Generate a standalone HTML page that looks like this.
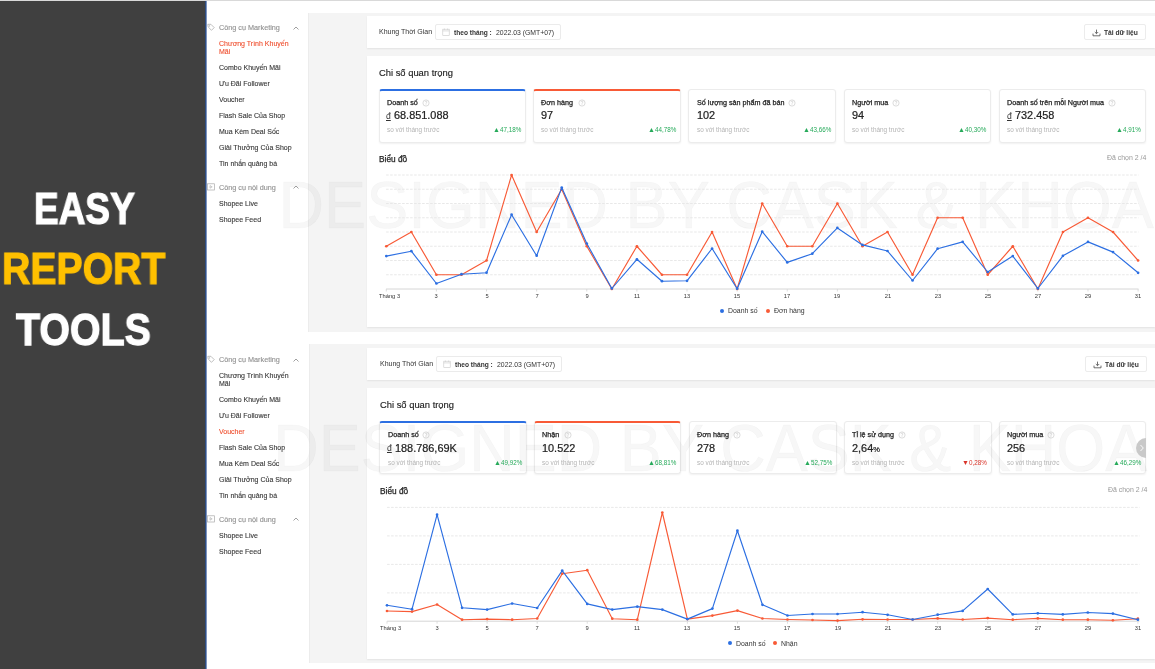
<!DOCTYPE html>
<html><head><meta charset="utf-8">
<style>
html,body{margin:0;padding:0;}
body{width:1155px;height:669px;overflow:hidden;position:relative;background:#fff;font-family:"Liberation Sans", sans-serif;}
.t{position:absolute;white-space:nowrap;font-family:"Liberation Sans", sans-serif;z-index:2;will-change:transform;}
svg{z-index:2;}
.wm{position:absolute;white-space:nowrap;font-family:"Liberation Sans", sans-serif;z-index:1;}
.kpi{position:absolute;background:#fff;border:1px solid #ececec;border-radius:3px;box-sizing:border-box;box-shadow:0 1px 2px rgba(0,0,0,0.06);}
.card{position:absolute;background:#fff;box-shadow:0 1px 2px rgba(0,0,0,0.08);}
</style></head><body>

<div style="position:absolute;left:0px;top:0px;width:1155px;height:1px;background:#d9d9d9;"></div>
<div style="position:absolute;left:0px;top:1px;width:205px;height:668px;background:#404040;"></div>
<div style="position:absolute;left:205px;top:1px;width:1px;height:668px;background:#2e4d80;"></div>
<div style="position:absolute;left:206px;top:1px;width:1px;height:668px;background:#7d93bd;"></div>
<div class="t" style="left:33.50px;top:184.70px;font-size:42.39px;line-height:47.35px;font-weight:bold;color:#ffffff;-webkit-text-stroke:1.2px #ffffff;transform-origin:0 0;transform:scale(0.8730,1.0310);">EASY</div>
<div class="t" style="left:1.60px;top:245.10px;font-size:43.62px;line-height:48.72px;font-weight:bold;color:#ffc000;-webkit-text-stroke:1.2px #ffc000;transform-origin:0 0;transform:scale(0.8990,0.9980);">REPORT</div>
<div class="t" style="left:15.50px;top:304.00px;font-size:43.07px;line-height:48.11px;font-weight:bold;color:#ffffff;-webkit-text-stroke:1.2px #ffffff;transform-origin:0 0;transform:scale(0.9140,1.0450);">TOOLS</div>
<svg style="position:absolute;left:207px;top:23px" width="9" height="9" viewBox="0 0 9 9"><path d="M0.8 1.3 L3.9 1.3 L7.2 4.6 L4.5 7.3 L1.2 4 Z" fill="none" stroke="#aaa" stroke-width="0.75" stroke-linejoin="round"/><circle cx="2.6" cy="2.9" r="0.55" fill="#aaa"/></svg>
<div class="t" style="left:218.80px;top:24.14px;font-size:7.25px;line-height:8.10px;color:#909090;font-weight:normal;-webkit-text-stroke:0.12px currentColor;">Công cụ Marketing</div>
<svg style="position:absolute;left:292px;top:25px" width="8" height="6" viewBox="0 0 8 6"><path d="M1.5 4.5 L4 2 L6.5 4.5" fill="none" stroke="#888" stroke-width="0.8"/></svg>
<div class="t" style="left:218.80px;top:40.06px;font-size:7.0px;line-height:7.82px;color:#ee4d2d;font-weight:normal;-webkit-text-stroke:0.1px currentColor;">Chương Trình Khuyến</div>
<div class="t" style="left:218.80px;top:47.66px;font-size:7.0px;line-height:7.82px;color:#ee4d2d;font-weight:normal;-webkit-text-stroke:0.1px currentColor;">Mãi</div>
<div class="t" style="left:218.80px;top:63.87px;font-size:7.0px;line-height:7.82px;color:#333;font-weight:normal;-webkit-text-stroke:0.1px currentColor;">Combo Khuyến Mãi</div>
<div class="t" style="left:218.80px;top:79.87px;font-size:7.0px;line-height:7.82px;color:#333;font-weight:normal;-webkit-text-stroke:0.1px currentColor;">Ưu Đãi Follower</div>
<div class="t" style="left:218.80px;top:95.67px;font-size:7.0px;line-height:7.82px;color:#333;font-weight:normal;-webkit-text-stroke:0.1px currentColor;">Voucher</div>
<div class="t" style="left:218.80px;top:111.87px;font-size:7.0px;line-height:7.82px;color:#333;font-weight:normal;-webkit-text-stroke:0.1px currentColor;">Flash Sale Của Shop</div>
<div class="t" style="left:218.80px;top:127.77px;font-size:7.0px;line-height:7.82px;color:#333;font-weight:normal;-webkit-text-stroke:0.1px currentColor;">Mua Kèm Deal Sốc</div>
<div class="t" style="left:218.80px;top:143.66px;font-size:7.0px;line-height:7.82px;color:#333;font-weight:normal;-webkit-text-stroke:0.1px currentColor;">Giải Thưởng Của Shop</div>
<div class="t" style="left:218.80px;top:159.66px;font-size:7.0px;line-height:7.82px;color:#333;font-weight:normal;-webkit-text-stroke:0.1px currentColor;">Tin nhắn quảng bá</div>
<svg style="position:absolute;left:207px;top:183px" width="8" height="8" viewBox="0 0 8 8"><rect x="0.6" y="0.8" width="6.8" height="6.2" fill="none" stroke="#aaa" stroke-width="0.7"/><path d="M3 2.6 L5.2 3.9 L3 5.2 Z" fill="none" stroke="#aaa" stroke-width="0.6"/></svg>
<div class="t" style="left:218.80px;top:183.74px;font-size:7.25px;line-height:8.10px;color:#909090;font-weight:normal;-webkit-text-stroke:0.12px currentColor;">Công cụ nội dung</div>
<svg style="position:absolute;left:292px;top:184px" width="8" height="6" viewBox="0 0 8 6"><path d="M1.5 4.5 L4 2 L6.5 4.5" fill="none" stroke="#888" stroke-width="0.8"/></svg>
<div class="t" style="left:218.80px;top:199.76px;font-size:7.0px;line-height:7.82px;color:#333;font-weight:normal;-webkit-text-stroke:0.1px currentColor;">Shopee Live</div>
<div class="t" style="left:218.80px;top:215.66px;font-size:7.0px;line-height:7.82px;color:#333;font-weight:normal;-webkit-text-stroke:0.1px currentColor;">Shopee Feed</div>
<svg style="position:absolute;left:207px;top:355px" width="9" height="9" viewBox="0 0 9 9"><path d="M0.8 1.3 L3.9 1.3 L7.2 4.6 L4.5 7.3 L1.2 4 Z" fill="none" stroke="#aaa" stroke-width="0.75" stroke-linejoin="round"/><circle cx="2.6" cy="2.9" r="0.55" fill="#aaa"/></svg>
<div class="t" style="left:219.40px;top:356.14px;font-size:7.25px;line-height:8.10px;color:#909090;font-weight:normal;-webkit-text-stroke:0.12px currentColor;">Công cụ Marketing</div>
<svg style="position:absolute;left:292px;top:357px" width="8" height="6" viewBox="0 0 8 6"><path d="M1.5 4.5 L4 2 L6.5 4.5" fill="none" stroke="#888" stroke-width="0.8"/></svg>
<div class="t" style="left:219.40px;top:372.06px;font-size:7.0px;line-height:7.82px;color:#333;font-weight:normal;-webkit-text-stroke:0.1px currentColor;">Chương Trình Khuyến</div>
<div class="t" style="left:219.40px;top:379.67px;font-size:7.0px;line-height:7.82px;color:#333;font-weight:normal;-webkit-text-stroke:0.1px currentColor;">Mãi</div>
<div class="t" style="left:219.40px;top:395.87px;font-size:7.0px;line-height:7.82px;color:#333;font-weight:normal;-webkit-text-stroke:0.1px currentColor;">Combo Khuyến Mãi</div>
<div class="t" style="left:219.40px;top:411.87px;font-size:7.0px;line-height:7.82px;color:#333;font-weight:normal;-webkit-text-stroke:0.1px currentColor;">Ưu Đãi Follower</div>
<div class="t" style="left:219.40px;top:427.67px;font-size:7.0px;line-height:7.82px;color:#ee4d2d;font-weight:normal;-webkit-text-stroke:0.1px currentColor;">Voucher</div>
<div class="t" style="left:219.40px;top:443.87px;font-size:7.0px;line-height:7.82px;color:#333;font-weight:normal;-webkit-text-stroke:0.1px currentColor;">Flash Sale Của Shop</div>
<div class="t" style="left:219.40px;top:459.77px;font-size:7.0px;line-height:7.82px;color:#333;font-weight:normal;-webkit-text-stroke:0.1px currentColor;">Mua Kèm Deal Sốc</div>
<div class="t" style="left:219.40px;top:475.67px;font-size:7.0px;line-height:7.82px;color:#333;font-weight:normal;-webkit-text-stroke:0.1px currentColor;">Giải Thưởng Của Shop</div>
<div class="t" style="left:219.40px;top:491.67px;font-size:7.0px;line-height:7.82px;color:#333;font-weight:normal;-webkit-text-stroke:0.1px currentColor;">Tin nhắn quảng bá</div>
<svg style="position:absolute;left:207px;top:515px" width="8" height="8" viewBox="0 0 8 8"><rect x="0.6" y="0.8" width="6.8" height="6.2" fill="none" stroke="#aaa" stroke-width="0.7"/><path d="M3 2.6 L5.2 3.9 L3 5.2 Z" fill="none" stroke="#aaa" stroke-width="0.6"/></svg>
<div class="t" style="left:219.40px;top:515.74px;font-size:7.25px;line-height:8.10px;color:#909090;font-weight:normal;-webkit-text-stroke:0.12px currentColor;">Công cụ nội dung</div>
<svg style="position:absolute;left:292px;top:516px" width="8" height="6" viewBox="0 0 8 6"><path d="M1.5 4.5 L4 2 L6.5 4.5" fill="none" stroke="#888" stroke-width="0.8"/></svg>
<div class="t" style="left:219.40px;top:531.76px;font-size:7.0px;line-height:7.82px;color:#333;font-weight:normal;-webkit-text-stroke:0.1px currentColor;">Shopee Live</div>
<div class="t" style="left:219.40px;top:547.66px;font-size:7.0px;line-height:7.82px;color:#333;font-weight:normal;-webkit-text-stroke:0.1px currentColor;">Shopee Feed</div>
<div style="position:absolute;left:308px;top:13px;width:847px;height:319px;background:#f4f4f4;"></div>
<div style="position:absolute;left:308px;top:13px;width:1px;height:319px;background:#ececec;"></div>
<div style="position:absolute;left:366.5px;top:15.5px;width:788.5px;height:32.0px;background:#fff;box-shadow:0 1px 1.5px rgba(0,0,0,0.07);"></div>
<div style="position:absolute;left:366.5px;top:55.7px;width:788.5px;height:271.3px;background:#fff;box-shadow:0 1px 1.5px rgba(0,0,0,0.07);"></div>
<div class="t" style="left:378.70px;top:27.87px;font-size:7.0px;line-height:7.82px;color:#333;font-weight:normal;">Khung Thời Gian</div>
<div style="position:absolute;left:435.0px;top:24.4px;width:125.5px;height:15.600000000000001px;border:1px solid #ebebeb;border-radius:2px;box-sizing:border-box;background:#fff;"></div>
<svg style="position:absolute;left:441.50px;top:28.00px" width="8" height="8" viewBox="0 0 8 8"><rect x="0.8" y="1.2" width="6.4" height="6.2" fill="none" stroke="#c8c8c8" stroke-width="0.6"/><path d="M0.8 2.9 H7.2 M2.4 0.5 V1.8 M5.6 0.5 V1.8" stroke="#c8c8c8" stroke-width="0.6"/></svg>
<div class="t" style="left:454.00px;top:28.53px;font-size:6.6px;line-height:7.37px;color:#333;font-weight:bold;">theo tháng :</div>
<div class="t" style="left:496.00px;top:28.78px;font-size:6.87px;line-height:7.67px;color:#333;font-weight:normal;">2022.03 (GMT+07)</div>
<div style="position:absolute;left:1083.5px;top:24.4px;width:62.299999999999955px;height:15.600000000000001px;border:1px solid #ececec;border-radius:2px;box-sizing:border-box;background:#fff;"></div>
<svg style="position:absolute;left:1091.50px;top:28.50px" width="9" height="8" viewBox="0 0 9 8"><path d="M4.5 0.6 V4.6 M2.8 3.0 L4.5 4.7 L6.2 3.0 M1.0 4.6 V6.8 H8.0 V4.6" fill="none" stroke="#555" stroke-width="0.85"/></svg>
<div class="t" style="left:1104.10px;top:28.54px;font-size:6.7px;line-height:7.48px;color:#333;font-weight:bold;">Tải dữ liệu</div>
<div class="t" style="left:378.70px;top:68.09px;font-size:9.4px;line-height:10.50px;color:#222;font-weight:normal;-webkit-text-stroke:0.15px #222;">Chi số quan trọng</div>
<div class="kpi" style="left:378.50px;top:89.00px;width:147.10px;height:53.60px;border-top:2px solid #2c6fe2;"></div>
<div class="t" style="left:386.60px;top:98.88px;font-size:7.2px;line-height:8.04px;color:#222;font-weight:normal;-webkit-text-stroke:0.25px #222;">Doanh số</div>
<svg style="position:absolute;left:421.60px;top:98.70px" width="8" height="8" viewBox="0 0 8 8"><circle cx="4" cy="4" r="3.1" fill="none" stroke="#c4c4c4" stroke-width="0.6"/><path d="M3 3.1 Q3 2.1 4 2.1 Q5 2.1 5 3 Q5 3.6 4 4 L4 4.7" fill="none" stroke="#c4c4c4" stroke-width="0.55"/><circle cx="4" cy="5.7" r="0.35" fill="#c4c4c4"/></svg>
<div class="t" style="left:386.30px;top:111.52px;font-size:8.6px;line-height:9.61px;color:#333;font-weight:normal;"><span style="text-decoration:underline;text-decoration-thickness:0.8px;text-underline-offset:0.6px">đ</span></div>
<div class="t" style="left:394.00px;top:109.44px;font-size:10.9px;line-height:12.18px;color:#222;font-weight:normal;-webkit-text-stroke:0.22px #222;">68.851.088</div>
<div class="t" style="left:386.60px;top:126.21px;font-size:6.4px;line-height:7.15px;color:#b4b4b4;font-weight:normal;">so với tháng trước</div>
<div class="t" style="right:634.00px;top:126.20px;font-size:6.3px;line-height:7.04px;color:#26aa5a;font-weight:normal;"><span style="font-size:7px;position:relative;top:0.3px">▲</span>47,18%</div>
<div class="kpi" style="left:533.10px;top:89.00px;width:147.70px;height:53.60px;border-top:2px solid #f85a36;"></div>
<div class="t" style="left:541.20px;top:98.88px;font-size:7.2px;line-height:8.04px;color:#222;font-weight:normal;-webkit-text-stroke:0.25px #222;">Đơn hàng</div>
<svg style="position:absolute;left:577.60px;top:98.70px" width="8" height="8" viewBox="0 0 8 8"><circle cx="4" cy="4" r="3.1" fill="none" stroke="#c4c4c4" stroke-width="0.6"/><path d="M3 3.1 Q3 2.1 4 2.1 Q5 2.1 5 3 Q5 3.6 4 4 L4 4.7" fill="none" stroke="#c4c4c4" stroke-width="0.55"/><circle cx="4" cy="5.7" r="0.35" fill="#c4c4c4"/></svg>
<div class="t" style="left:541.20px;top:109.44px;font-size:10.9px;line-height:12.18px;color:#222;font-weight:normal;-webkit-text-stroke:0.22px #222;">97</div>
<div class="t" style="left:541.20px;top:126.21px;font-size:6.4px;line-height:7.15px;color:#b4b4b4;font-weight:normal;">so với tháng trước</div>
<div class="t" style="right:478.80px;top:126.20px;font-size:6.3px;line-height:7.04px;color:#26aa5a;font-weight:normal;"><span style="font-size:7px;position:relative;top:0.3px">▲</span>44,78%</div>
<div class="kpi" style="left:688.40px;top:89.00px;width:147.60px;height:53.60px;"></div>
<div class="t" style="left:696.50px;top:98.88px;font-size:7.2px;line-height:8.04px;color:#222;font-weight:normal;-webkit-text-stroke:0.25px #222;">Số lượng sản phẩm đã bán</div>
<svg style="position:absolute;left:788.20px;top:98.70px" width="8" height="8" viewBox="0 0 8 8"><circle cx="4" cy="4" r="3.1" fill="none" stroke="#c4c4c4" stroke-width="0.6"/><path d="M3 3.1 Q3 2.1 4 2.1 Q5 2.1 5 3 Q5 3.6 4 4 L4 4.7" fill="none" stroke="#c4c4c4" stroke-width="0.55"/><circle cx="4" cy="5.7" r="0.35" fill="#c4c4c4"/></svg>
<div class="t" style="left:696.50px;top:109.44px;font-size:10.9px;line-height:12.18px;color:#222;font-weight:normal;-webkit-text-stroke:0.22px #222;">102</div>
<div class="t" style="left:696.50px;top:126.21px;font-size:6.4px;line-height:7.15px;color:#b4b4b4;font-weight:normal;">so với tháng trước</div>
<div class="t" style="right:323.60px;top:126.20px;font-size:6.3px;line-height:7.04px;color:#26aa5a;font-weight:normal;"><span style="font-size:7px;position:relative;top:0.3px">▲</span>43,66%</div>
<div class="kpi" style="left:843.80px;top:89.00px;width:146.80px;height:53.60px;"></div>
<div class="t" style="left:851.90px;top:98.88px;font-size:7.2px;line-height:8.04px;color:#222;font-weight:normal;-webkit-text-stroke:0.25px #222;">Người mua</div>
<svg style="position:absolute;left:892.00px;top:98.70px" width="8" height="8" viewBox="0 0 8 8"><circle cx="4" cy="4" r="3.1" fill="none" stroke="#c4c4c4" stroke-width="0.6"/><path d="M3 3.1 Q3 2.1 4 2.1 Q5 2.1 5 3 Q5 3.6 4 4 L4 4.7" fill="none" stroke="#c4c4c4" stroke-width="0.55"/><circle cx="4" cy="5.7" r="0.35" fill="#c4c4c4"/></svg>
<div class="t" style="left:851.90px;top:109.44px;font-size:10.9px;line-height:12.18px;color:#222;font-weight:normal;-webkit-text-stroke:0.22px #222;">94</div>
<div class="t" style="left:851.90px;top:126.21px;font-size:6.4px;line-height:7.15px;color:#b4b4b4;font-weight:normal;">so với tháng trước</div>
<div class="t" style="right:169.00px;top:126.20px;font-size:6.3px;line-height:7.04px;color:#26aa5a;font-weight:normal;"><span style="font-size:7px;position:relative;top:0.3px">▲</span>40,30%</div>
<div class="kpi" style="left:999.00px;top:89.00px;width:146.80px;height:53.60px;"></div>
<div class="t" style="left:1007.10px;top:98.88px;font-size:7.2px;line-height:8.04px;color:#222;font-weight:normal;-webkit-text-stroke:0.25px #222;">Doanh số trên mỗi Người mua</div>
<svg style="position:absolute;left:1108.30px;top:98.70px" width="8" height="8" viewBox="0 0 8 8"><circle cx="4" cy="4" r="3.1" fill="none" stroke="#c4c4c4" stroke-width="0.6"/><path d="M3 3.1 Q3 2.1 4 2.1 Q5 2.1 5 3 Q5 3.6 4 4 L4 4.7" fill="none" stroke="#c4c4c4" stroke-width="0.55"/><circle cx="4" cy="5.7" r="0.35" fill="#c4c4c4"/></svg>
<div class="t" style="left:1006.80px;top:111.52px;font-size:8.6px;line-height:9.61px;color:#333;font-weight:normal;"><span style="text-decoration:underline;text-decoration-thickness:0.8px;text-underline-offset:0.6px">đ</span></div>
<div class="t" style="left:1014.50px;top:109.44px;font-size:10.9px;line-height:12.18px;color:#222;font-weight:normal;-webkit-text-stroke:0.22px #222;">732.458</div>
<div class="t" style="left:1007.10px;top:126.21px;font-size:6.4px;line-height:7.15px;color:#b4b4b4;font-weight:normal;">so với tháng trước</div>
<div class="t" style="right:13.80px;top:126.20px;font-size:6.3px;line-height:7.04px;color:#26aa5a;font-weight:normal;"><span style="font-size:7px;position:relative;top:0.3px">▲</span>4,91%</div>
<div class="t" style="left:378.70px;top:154.79px;font-size:8.3px;line-height:9.27px;color:#222;font-weight:normal;-webkit-text-stroke:0.25px #222;">Biểu đồ</div>
<div class="t" style="right:9.00px;top:154.01px;font-size:6.95px;line-height:7.76px;color:#999;font-weight:normal;">Đã chọn 2 /4</div>
<svg style="position:absolute;left:0;top:0" width="1155" height="669"><line x1="386.1" y1="175.0" x2="1138.5" y2="175.0" stroke="#e5e5e5" stroke-width="0.9" stroke-dasharray="2.6 1.4"/><line x1="386.1" y1="189.25" x2="1138.5" y2="189.25" stroke="#e5e5e5" stroke-width="0.9" stroke-dasharray="2.6 1.4"/><line x1="386.1" y1="203.5" x2="1138.5" y2="203.5" stroke="#e5e5e5" stroke-width="0.9" stroke-dasharray="2.6 1.4"/><line x1="386.1" y1="217.75" x2="1138.5" y2="217.75" stroke="#e5e5e5" stroke-width="0.9" stroke-dasharray="2.6 1.4"/><line x1="386.1" y1="232.0" x2="1138.5" y2="232.0" stroke="#e5e5e5" stroke-width="0.9" stroke-dasharray="2.6 1.4"/><line x1="386.1" y1="246.25" x2="1138.5" y2="246.25" stroke="#e5e5e5" stroke-width="0.9" stroke-dasharray="2.6 1.4"/><line x1="386.1" y1="260.5" x2="1138.5" y2="260.5" stroke="#e5e5e5" stroke-width="0.9" stroke-dasharray="2.6 1.4"/><line x1="386.1" y1="274.75" x2="1138.5" y2="274.75" stroke="#e5e5e5" stroke-width="0.9" stroke-dasharray="2.6 1.4"/><line x1="386.1" y1="289" x2="1138.5" y2="289" stroke="#d6d6d6" stroke-width="1"/><line x1="386.30" y1="289" x2="386.30" y2="291.5" stroke="#d6d6d6" stroke-width="0.8"/><line x1="436.42" y1="289" x2="436.42" y2="291.5" stroke="#d6d6d6" stroke-width="0.8"/><line x1="486.54" y1="289" x2="486.54" y2="291.5" stroke="#d6d6d6" stroke-width="0.8"/><line x1="536.66" y1="289" x2="536.66" y2="291.5" stroke="#d6d6d6" stroke-width="0.8"/><line x1="586.78" y1="289" x2="586.78" y2="291.5" stroke="#d6d6d6" stroke-width="0.8"/><line x1="636.90" y1="289" x2="636.90" y2="291.5" stroke="#d6d6d6" stroke-width="0.8"/><line x1="687.02" y1="289" x2="687.02" y2="291.5" stroke="#d6d6d6" stroke-width="0.8"/><line x1="737.14" y1="289" x2="737.14" y2="291.5" stroke="#d6d6d6" stroke-width="0.8"/><line x1="787.26" y1="289" x2="787.26" y2="291.5" stroke="#d6d6d6" stroke-width="0.8"/><line x1="837.38" y1="289" x2="837.38" y2="291.5" stroke="#d6d6d6" stroke-width="0.8"/><line x1="887.50" y1="289" x2="887.50" y2="291.5" stroke="#d6d6d6" stroke-width="0.8"/><line x1="937.62" y1="289" x2="937.62" y2="291.5" stroke="#d6d6d6" stroke-width="0.8"/><line x1="987.74" y1="289" x2="987.74" y2="291.5" stroke="#d6d6d6" stroke-width="0.8"/><line x1="1037.86" y1="289" x2="1037.86" y2="291.5" stroke="#d6d6d6" stroke-width="0.8"/><line x1="1087.98" y1="289" x2="1087.98" y2="291.5" stroke="#d6d6d6" stroke-width="0.8"/><line x1="1138.10" y1="289" x2="1138.10" y2="291.5" stroke="#d6d6d6" stroke-width="0.8"/><polyline points="386.30,246.25 411.36,232.00 436.42,274.75 461.48,274.75 486.54,260.50 511.60,175.00 536.66,232.00 561.72,189.25 586.78,246.25 611.84,289.00 636.90,246.25 661.96,274.75 687.02,274.75 712.08,232.00 737.14,289.00 762.20,203.50 787.26,246.25 812.32,246.25 837.38,203.50 862.44,246.25 887.50,232.00 912.56,274.75 937.62,217.75 962.68,217.75 987.74,274.75 1012.80,246.25 1037.86,289.00 1062.92,232.00 1087.98,217.75 1113.04,232.00 1138.10,260.50" fill="none" stroke="#f85a36" stroke-width="1.15" stroke-linejoin="round"/><circle cx="386.30" cy="246.25" r="1.35" fill="#f85a36"/><circle cx="411.36" cy="232.00" r="1.35" fill="#f85a36"/><circle cx="436.42" cy="274.75" r="1.35" fill="#f85a36"/><circle cx="461.48" cy="274.75" r="1.35" fill="#f85a36"/><circle cx="486.54" cy="260.50" r="1.35" fill="#f85a36"/><circle cx="511.60" cy="175.00" r="1.35" fill="#f85a36"/><circle cx="536.66" cy="232.00" r="1.35" fill="#f85a36"/><circle cx="561.72" cy="189.25" r="1.35" fill="#f85a36"/><circle cx="586.78" cy="246.25" r="1.35" fill="#f85a36"/><circle cx="611.84" cy="289.00" r="1.35" fill="#f85a36"/><circle cx="636.90" cy="246.25" r="1.35" fill="#f85a36"/><circle cx="661.96" cy="274.75" r="1.35" fill="#f85a36"/><circle cx="687.02" cy="274.75" r="1.35" fill="#f85a36"/><circle cx="712.08" cy="232.00" r="1.35" fill="#f85a36"/><circle cx="737.14" cy="289.00" r="1.35" fill="#f85a36"/><circle cx="762.20" cy="203.50" r="1.35" fill="#f85a36"/><circle cx="787.26" cy="246.25" r="1.35" fill="#f85a36"/><circle cx="812.32" cy="246.25" r="1.35" fill="#f85a36"/><circle cx="837.38" cy="203.50" r="1.35" fill="#f85a36"/><circle cx="862.44" cy="246.25" r="1.35" fill="#f85a36"/><circle cx="887.50" cy="232.00" r="1.35" fill="#f85a36"/><circle cx="912.56" cy="274.75" r="1.35" fill="#f85a36"/><circle cx="937.62" cy="217.75" r="1.35" fill="#f85a36"/><circle cx="962.68" cy="217.75" r="1.35" fill="#f85a36"/><circle cx="987.74" cy="274.75" r="1.35" fill="#f85a36"/><circle cx="1012.80" cy="246.25" r="1.35" fill="#f85a36"/><circle cx="1037.86" cy="289.00" r="1.35" fill="#f85a36"/><circle cx="1062.92" cy="232.00" r="1.35" fill="#f85a36"/><circle cx="1087.98" cy="217.75" r="1.35" fill="#f85a36"/><circle cx="1113.04" cy="232.00" r="1.35" fill="#f85a36"/><circle cx="1138.10" cy="260.50" r="1.35" fill="#f85a36"/><polyline points="386.30,256.10 411.36,251.20 436.42,283.50 461.48,274.20 486.54,272.70 511.60,214.70 536.66,255.70 561.72,187.60 586.78,243.50 611.84,288.50 636.90,259.30 661.96,281.20 687.02,280.80 712.08,248.50 737.14,288.70 762.20,231.70 787.26,262.40 812.32,253.70 837.38,227.90 862.44,244.90 887.50,251.00 912.56,280.50 937.62,248.70 962.68,241.90 987.74,272.00 1012.80,256.10 1037.86,288.50 1062.92,255.80 1087.98,241.90 1113.04,252.10 1138.10,272.80" fill="none" stroke="#2c6fe2" stroke-width="1.15" stroke-linejoin="round"/><circle cx="386.30" cy="256.10" r="1.35" fill="#2c6fe2"/><circle cx="411.36" cy="251.20" r="1.35" fill="#2c6fe2"/><circle cx="436.42" cy="283.50" r="1.35" fill="#2c6fe2"/><circle cx="461.48" cy="274.20" r="1.35" fill="#2c6fe2"/><circle cx="486.54" cy="272.70" r="1.35" fill="#2c6fe2"/><circle cx="511.60" cy="214.70" r="1.35" fill="#2c6fe2"/><circle cx="536.66" cy="255.70" r="1.35" fill="#2c6fe2"/><circle cx="561.72" cy="187.60" r="1.35" fill="#2c6fe2"/><circle cx="586.78" cy="243.50" r="1.35" fill="#2c6fe2"/><circle cx="611.84" cy="288.50" r="1.35" fill="#2c6fe2"/><circle cx="636.90" cy="259.30" r="1.35" fill="#2c6fe2"/><circle cx="661.96" cy="281.20" r="1.35" fill="#2c6fe2"/><circle cx="687.02" cy="280.80" r="1.35" fill="#2c6fe2"/><circle cx="712.08" cy="248.50" r="1.35" fill="#2c6fe2"/><circle cx="737.14" cy="288.70" r="1.35" fill="#2c6fe2"/><circle cx="762.20" cy="231.70" r="1.35" fill="#2c6fe2"/><circle cx="787.26" cy="262.40" r="1.35" fill="#2c6fe2"/><circle cx="812.32" cy="253.70" r="1.35" fill="#2c6fe2"/><circle cx="837.38" cy="227.90" r="1.35" fill="#2c6fe2"/><circle cx="862.44" cy="244.90" r="1.35" fill="#2c6fe2"/><circle cx="887.50" cy="251.00" r="1.35" fill="#2c6fe2"/><circle cx="912.56" cy="280.50" r="1.35" fill="#2c6fe2"/><circle cx="937.62" cy="248.70" r="1.35" fill="#2c6fe2"/><circle cx="962.68" cy="241.90" r="1.35" fill="#2c6fe2"/><circle cx="987.74" cy="272.00" r="1.35" fill="#2c6fe2"/><circle cx="1012.80" cy="256.10" r="1.35" fill="#2c6fe2"/><circle cx="1037.86" cy="288.50" r="1.35" fill="#2c6fe2"/><circle cx="1062.92" cy="255.80" r="1.35" fill="#2c6fe2"/><circle cx="1087.98" cy="241.90" r="1.35" fill="#2c6fe2"/><circle cx="1113.04" cy="252.10" r="1.35" fill="#2c6fe2"/><circle cx="1138.10" cy="272.80" r="1.35" fill="#2c6fe2"/></svg>
<div class="t" style="left:378.70px;top:293.10px;font-size:5.75px;line-height:6.42px;color:#333;font-weight:normal;">Tháng 3</div>
<div class="t" style="left:436.42px;transform:translateX(-50%);top:293.10px;font-size:5.75px;line-height:6.42px;color:#333;font-weight:normal;">3</div>
<div class="t" style="left:486.54px;transform:translateX(-50%);top:293.10px;font-size:5.75px;line-height:6.42px;color:#333;font-weight:normal;">5</div>
<div class="t" style="left:536.66px;transform:translateX(-50%);top:293.10px;font-size:5.75px;line-height:6.42px;color:#333;font-weight:normal;">7</div>
<div class="t" style="left:586.78px;transform:translateX(-50%);top:293.10px;font-size:5.75px;line-height:6.42px;color:#333;font-weight:normal;">9</div>
<div class="t" style="left:636.90px;transform:translateX(-50%);top:293.10px;font-size:5.75px;line-height:6.42px;color:#333;font-weight:normal;">11</div>
<div class="t" style="left:687.02px;transform:translateX(-50%);top:293.10px;font-size:5.75px;line-height:6.42px;color:#333;font-weight:normal;">13</div>
<div class="t" style="left:737.14px;transform:translateX(-50%);top:293.10px;font-size:5.75px;line-height:6.42px;color:#333;font-weight:normal;">15</div>
<div class="t" style="left:787.26px;transform:translateX(-50%);top:293.10px;font-size:5.75px;line-height:6.42px;color:#333;font-weight:normal;">17</div>
<div class="t" style="left:837.38px;transform:translateX(-50%);top:293.10px;font-size:5.75px;line-height:6.42px;color:#333;font-weight:normal;">19</div>
<div class="t" style="left:887.50px;transform:translateX(-50%);top:293.10px;font-size:5.75px;line-height:6.42px;color:#333;font-weight:normal;">21</div>
<div class="t" style="left:937.62px;transform:translateX(-50%);top:293.10px;font-size:5.75px;line-height:6.42px;color:#333;font-weight:normal;">23</div>
<div class="t" style="left:987.74px;transform:translateX(-50%);top:293.10px;font-size:5.75px;line-height:6.42px;color:#333;font-weight:normal;">25</div>
<div class="t" style="left:1037.86px;transform:translateX(-50%);top:293.10px;font-size:5.75px;line-height:6.42px;color:#333;font-weight:normal;">27</div>
<div class="t" style="left:1087.98px;transform:translateX(-50%);top:293.10px;font-size:5.75px;line-height:6.42px;color:#333;font-weight:normal;">29</div>
<div class="t" style="left:1138.10px;transform:translateX(-50%);top:293.10px;font-size:5.75px;line-height:6.42px;color:#333;font-weight:normal;">31</div>
<div style="position:absolute;left:719.90px;top:309.00px;width:4.2px;height:4.2px;border-radius:50%;background:#2c6fe2"></div>
<div class="t" style="left:727.80px;top:307.26px;font-size:6.9px;line-height:7.71px;color:#333;font-weight:normal;">Doanh số</div>
<div style="position:absolute;left:765.70px;top:309.00px;width:4.2px;height:4.2px;border-radius:50%;background:#f85a36"></div>
<div class="t" style="left:773.70px;top:307.26px;font-size:6.9px;line-height:7.71px;color:#333;font-weight:normal;">Đơn hàng</div>
<div style="position:absolute;left:309px;top:344px;width:846px;height:319px;background:#f4f4f4;"></div>
<div style="position:absolute;left:309px;top:344px;width:1px;height:319px;background:#ececec;"></div>
<div style="position:absolute;left:367.4px;top:348px;width:787.6px;height:32.19999999999999px;background:#fff;box-shadow:0 1px 1.5px rgba(0,0,0,0.07);"></div>
<div style="position:absolute;left:367.4px;top:387.6px;width:787.6px;height:271.9px;background:#fff;box-shadow:0 1px 1.5px rgba(0,0,0,0.07);"></div>
<div class="t" style="left:379.70px;top:359.87px;font-size:7.0px;line-height:7.82px;color:#333;font-weight:normal;">Khung Thời Gian</div>
<div style="position:absolute;left:436.0px;top:356.4px;width:125.5px;height:15.600000000000023px;border:1px solid #ebebeb;border-radius:2px;box-sizing:border-box;background:#fff;"></div>
<svg style="position:absolute;left:442.50px;top:360.00px" width="8" height="8" viewBox="0 0 8 8"><rect x="0.8" y="1.2" width="6.4" height="6.2" fill="none" stroke="#c8c8c8" stroke-width="0.6"/><path d="M0.8 2.9 H7.2 M2.4 0.5 V1.8 M5.6 0.5 V1.8" stroke="#c8c8c8" stroke-width="0.6"/></svg>
<div class="t" style="left:455.00px;top:360.53px;font-size:6.6px;line-height:7.37px;color:#333;font-weight:bold;">theo tháng :</div>
<div class="t" style="left:497.00px;top:360.78px;font-size:6.87px;line-height:7.67px;color:#333;font-weight:normal;">2022.03 (GMT+07)</div>
<div style="position:absolute;left:1084.5px;top:356.4px;width:62.299999999999955px;height:15.600000000000023px;border:1px solid #ececec;border-radius:2px;box-sizing:border-box;background:#fff;"></div>
<svg style="position:absolute;left:1092.50px;top:360.50px" width="9" height="8" viewBox="0 0 9 8"><path d="M4.5 0.6 V4.6 M2.8 3.0 L4.5 4.7 L6.2 3.0 M1.0 4.6 V6.8 H8.0 V4.6" fill="none" stroke="#555" stroke-width="0.85"/></svg>
<div class="t" style="left:1105.10px;top:360.54px;font-size:6.7px;line-height:7.48px;color:#333;font-weight:bold;">Tải dữ liệu</div>
<div class="t" style="left:379.70px;top:400.09px;font-size:9.4px;line-height:10.50px;color:#222;font-weight:normal;-webkit-text-stroke:0.15px #222;">Chi số quan trọng</div>
<div class="kpi" style="left:379.40px;top:421.30px;width:147.20px;height:53.00px;border-top:2px solid #2c6fe2;"></div>
<div class="t" style="left:387.50px;top:430.58px;font-size:7.2px;line-height:8.04px;color:#222;font-weight:normal;-webkit-text-stroke:0.25px #222;">Doanh số</div>
<svg style="position:absolute;left:422.20px;top:431.00px" width="8" height="8" viewBox="0 0 8 8"><circle cx="4" cy="4" r="3.1" fill="none" stroke="#c4c4c4" stroke-width="0.6"/><path d="M3 3.1 Q3 2.1 4 2.1 Q5 2.1 5 3 Q5 3.6 4 4 L4 4.7" fill="none" stroke="#c4c4c4" stroke-width="0.55"/><circle cx="4" cy="5.7" r="0.35" fill="#c4c4c4"/></svg>
<div class="t" style="left:387.20px;top:444.12px;font-size:8.6px;line-height:9.61px;color:#333;font-weight:normal;"><span style="text-decoration:underline;text-decoration-thickness:0.8px;text-underline-offset:0.6px">đ</span></div>
<div class="t" style="left:394.90px;top:442.04px;font-size:10.9px;line-height:12.18px;color:#222;font-weight:normal;-webkit-text-stroke:0.22px #222;">188.786,69K</div>
<div class="t" style="left:387.50px;top:458.51px;font-size:6.4px;line-height:7.15px;color:#b4b4b4;font-weight:normal;">so với tháng trước</div>
<div class="t" style="right:633.00px;top:458.50px;font-size:6.3px;line-height:7.04px;color:#26aa5a;font-weight:normal;"><span style="font-size:7px;position:relative;top:0.3px">▲</span>49,92%</div>
<div class="kpi" style="left:534.30px;top:421.30px;width:146.70px;height:53.00px;border-top:2px solid #f85a36;"></div>
<div class="t" style="left:542.40px;top:430.58px;font-size:7.2px;line-height:8.04px;color:#222;font-weight:normal;-webkit-text-stroke:0.25px #222;">Nhận</div>
<svg style="position:absolute;left:563.50px;top:431.00px" width="8" height="8" viewBox="0 0 8 8"><circle cx="4" cy="4" r="3.1" fill="none" stroke="#c4c4c4" stroke-width="0.6"/><path d="M3 3.1 Q3 2.1 4 2.1 Q5 2.1 5 3 Q5 3.6 4 4 L4 4.7" fill="none" stroke="#c4c4c4" stroke-width="0.55"/><circle cx="4" cy="5.7" r="0.35" fill="#c4c4c4"/></svg>
<div class="t" style="left:542.40px;top:442.04px;font-size:10.9px;line-height:12.18px;color:#222;font-weight:normal;-webkit-text-stroke:0.22px #222;">10.522</div>
<div class="t" style="left:542.40px;top:458.51px;font-size:6.4px;line-height:7.15px;color:#b4b4b4;font-weight:normal;">so với tháng trước</div>
<div class="t" style="right:478.60px;top:458.50px;font-size:6.3px;line-height:7.04px;color:#26aa5a;font-weight:normal;"><span style="font-size:7px;position:relative;top:0.3px">▲</span>68,81%</div>
<div class="kpi" style="left:688.90px;top:421.30px;width:147.70px;height:53.00px;"></div>
<div class="t" style="left:697.00px;top:430.58px;font-size:7.2px;line-height:8.04px;color:#222;font-weight:normal;-webkit-text-stroke:0.25px #222;">Đơn hàng</div>
<svg style="position:absolute;left:732.80px;top:431.00px" width="8" height="8" viewBox="0 0 8 8"><circle cx="4" cy="4" r="3.1" fill="none" stroke="#c4c4c4" stroke-width="0.6"/><path d="M3 3.1 Q3 2.1 4 2.1 Q5 2.1 5 3 Q5 3.6 4 4 L4 4.7" fill="none" stroke="#c4c4c4" stroke-width="0.55"/><circle cx="4" cy="5.7" r="0.35" fill="#c4c4c4"/></svg>
<div class="t" style="left:697.00px;top:442.04px;font-size:10.9px;line-height:12.18px;color:#222;font-weight:normal;-webkit-text-stroke:0.22px #222;">278</div>
<div class="t" style="left:697.00px;top:458.51px;font-size:6.4px;line-height:7.15px;color:#b4b4b4;font-weight:normal;">so với tháng trước</div>
<div class="t" style="right:323.00px;top:458.50px;font-size:6.3px;line-height:7.04px;color:#26aa5a;font-weight:normal;"><span style="font-size:7px;position:relative;top:0.3px">▲</span>52,75%</div>
<div class="kpi" style="left:844.20px;top:421.30px;width:147.40px;height:53.00px;"></div>
<div class="t" style="left:852.30px;top:430.58px;font-size:7.2px;line-height:8.04px;color:#222;font-weight:normal;-webkit-text-stroke:0.25px #222;">Tỉ lệ sử dụng</div>
<svg style="position:absolute;left:898.00px;top:431.00px" width="8" height="8" viewBox="0 0 8 8"><circle cx="4" cy="4" r="3.1" fill="none" stroke="#c4c4c4" stroke-width="0.6"/><path d="M3 3.1 Q3 2.1 4 2.1 Q5 2.1 5 3 Q5 3.6 4 4 L4 4.7" fill="none" stroke="#c4c4c4" stroke-width="0.55"/><circle cx="4" cy="5.7" r="0.35" fill="#c4c4c4"/></svg>
<div class="t" style="left:852.30px;top:442.04px;font-size:10.9px;line-height:12.18px;color:#222;font-weight:normal;-webkit-text-stroke:0.22px #222;">2,64<span style="font-size:7.5px">%</span></div>
<div class="t" style="left:852.30px;top:458.51px;font-size:6.4px;line-height:7.15px;color:#b4b4b4;font-weight:normal;">so với tháng trước</div>
<div class="t" style="right:168.00px;top:458.50px;font-size:6.3px;line-height:7.04px;color:#d9342a;font-weight:normal;"><span style="font-size:7px;position:relative;top:0.3px">▼</span>0,28%</div>
<div class="kpi" style="left:999.20px;top:421.30px;width:147.10px;height:53.00px;"></div>
<div class="t" style="left:1007.30px;top:430.58px;font-size:7.2px;line-height:8.04px;color:#222;font-weight:normal;-webkit-text-stroke:0.25px #222;">Người mua</div>
<svg style="position:absolute;left:1047.40px;top:431.00px" width="8" height="8" viewBox="0 0 8 8"><circle cx="4" cy="4" r="3.1" fill="none" stroke="#c4c4c4" stroke-width="0.6"/><path d="M3 3.1 Q3 2.1 4 2.1 Q5 2.1 5 3 Q5 3.6 4 4 L4 4.7" fill="none" stroke="#c4c4c4" stroke-width="0.55"/><circle cx="4" cy="5.7" r="0.35" fill="#c4c4c4"/></svg>
<div class="t" style="left:1007.30px;top:442.04px;font-size:10.9px;line-height:12.18px;color:#222;font-weight:normal;-webkit-text-stroke:0.22px #222;">256</div>
<div class="t" style="left:1007.30px;top:458.51px;font-size:6.4px;line-height:7.15px;color:#b4b4b4;font-weight:normal;">so với tháng trước</div>
<div class="t" style="right:13.30px;top:458.50px;font-size:6.3px;line-height:7.04px;color:#26aa5a;font-weight:normal;"><span style="font-size:7px;position:relative;top:0.3px">▲</span>46,29%</div>
<div class="t" style="left:379.70px;top:486.79px;font-size:8.3px;line-height:9.27px;color:#222;font-weight:normal;-webkit-text-stroke:0.25px #222;">Biểu đồ</div>
<div class="t" style="right:8.00px;top:486.01px;font-size:6.95px;line-height:7.76px;color:#999;font-weight:normal;">Đã chọn 2 /4</div>
<svg style="position:absolute;left:0;top:0" width="1155" height="669"><line x1="387.1" y1="507.4" x2="1139.5" y2="507.4" stroke="#e5e5e5" stroke-width="0.9" stroke-dasharray="2.6 1.4"/><line x1="387.1" y1="535.9" x2="1139.5" y2="535.9" stroke="#e5e5e5" stroke-width="0.9" stroke-dasharray="2.6 1.4"/><line x1="387.1" y1="564.4" x2="1139.5" y2="564.4" stroke="#e5e5e5" stroke-width="0.9" stroke-dasharray="2.6 1.4"/><line x1="387.1" y1="592.9" x2="1139.5" y2="592.9" stroke="#e5e5e5" stroke-width="0.9" stroke-dasharray="2.6 1.4"/><line x1="387.1" y1="621.2" x2="1139.5" y2="621.2" stroke="#d6d6d6" stroke-width="1"/><line x1="387.00" y1="621.2" x2="387.00" y2="623.7" stroke="#d6d6d6" stroke-width="0.8"/><line x1="437.06" y1="621.2" x2="437.06" y2="623.7" stroke="#d6d6d6" stroke-width="0.8"/><line x1="487.12" y1="621.2" x2="487.12" y2="623.7" stroke="#d6d6d6" stroke-width="0.8"/><line x1="537.18" y1="621.2" x2="537.18" y2="623.7" stroke="#d6d6d6" stroke-width="0.8"/><line x1="587.24" y1="621.2" x2="587.24" y2="623.7" stroke="#d6d6d6" stroke-width="0.8"/><line x1="637.30" y1="621.2" x2="637.30" y2="623.7" stroke="#d6d6d6" stroke-width="0.8"/><line x1="687.36" y1="621.2" x2="687.36" y2="623.7" stroke="#d6d6d6" stroke-width="0.8"/><line x1="737.42" y1="621.2" x2="737.42" y2="623.7" stroke="#d6d6d6" stroke-width="0.8"/><line x1="787.48" y1="621.2" x2="787.48" y2="623.7" stroke="#d6d6d6" stroke-width="0.8"/><line x1="837.54" y1="621.2" x2="837.54" y2="623.7" stroke="#d6d6d6" stroke-width="0.8"/><line x1="887.60" y1="621.2" x2="887.60" y2="623.7" stroke="#d6d6d6" stroke-width="0.8"/><line x1="937.66" y1="621.2" x2="937.66" y2="623.7" stroke="#d6d6d6" stroke-width="0.8"/><line x1="987.72" y1="621.2" x2="987.72" y2="623.7" stroke="#d6d6d6" stroke-width="0.8"/><line x1="1037.78" y1="621.2" x2="1037.78" y2="623.7" stroke="#d6d6d6" stroke-width="0.8"/><line x1="1087.84" y1="621.2" x2="1087.84" y2="623.7" stroke="#d6d6d6" stroke-width="0.8"/><line x1="1137.90" y1="621.2" x2="1137.90" y2="623.7" stroke="#d6d6d6" stroke-width="0.8"/><polyline points="387.00,611.00 412.03,611.60 437.06,604.50 462.09,619.70 487.12,619.10 512.15,619.70 537.18,618.50 562.21,573.70 587.24,570.20 612.27,618.70 637.30,619.70 662.33,512.50 687.36,619.10 712.39,615.60 737.42,610.60 762.45,618.50 787.48,619.50 812.51,620.00 837.54,620.60 862.57,619.30 887.60,619.50 912.63,619.50 937.66,618.40 962.69,619.50 987.72,618.10 1012.75,619.70 1037.78,618.40 1062.81,619.70 1087.84,619.70 1112.87,620.30 1137.90,618.70" fill="none" stroke="#f85a36" stroke-width="1.15" stroke-linejoin="round"/><circle cx="387.00" cy="611.00" r="1.35" fill="#f85a36"/><circle cx="412.03" cy="611.60" r="1.35" fill="#f85a36"/><circle cx="437.06" cy="604.50" r="1.35" fill="#f85a36"/><circle cx="462.09" cy="619.70" r="1.35" fill="#f85a36"/><circle cx="487.12" cy="619.10" r="1.35" fill="#f85a36"/><circle cx="512.15" cy="619.70" r="1.35" fill="#f85a36"/><circle cx="537.18" cy="618.50" r="1.35" fill="#f85a36"/><circle cx="562.21" cy="573.70" r="1.35" fill="#f85a36"/><circle cx="587.24" cy="570.20" r="1.35" fill="#f85a36"/><circle cx="612.27" cy="618.70" r="1.35" fill="#f85a36"/><circle cx="637.30" cy="619.70" r="1.35" fill="#f85a36"/><circle cx="662.33" cy="512.50" r="1.35" fill="#f85a36"/><circle cx="687.36" cy="619.10" r="1.35" fill="#f85a36"/><circle cx="712.39" cy="615.60" r="1.35" fill="#f85a36"/><circle cx="737.42" cy="610.60" r="1.35" fill="#f85a36"/><circle cx="762.45" cy="618.50" r="1.35" fill="#f85a36"/><circle cx="787.48" cy="619.50" r="1.35" fill="#f85a36"/><circle cx="812.51" cy="620.00" r="1.35" fill="#f85a36"/><circle cx="837.54" cy="620.60" r="1.35" fill="#f85a36"/><circle cx="862.57" cy="619.30" r="1.35" fill="#f85a36"/><circle cx="887.60" cy="619.50" r="1.35" fill="#f85a36"/><circle cx="912.63" cy="619.50" r="1.35" fill="#f85a36"/><circle cx="937.66" cy="618.40" r="1.35" fill="#f85a36"/><circle cx="962.69" cy="619.50" r="1.35" fill="#f85a36"/><circle cx="987.72" cy="618.10" r="1.35" fill="#f85a36"/><circle cx="1012.75" cy="619.70" r="1.35" fill="#f85a36"/><circle cx="1037.78" cy="618.40" r="1.35" fill="#f85a36"/><circle cx="1062.81" cy="619.70" r="1.35" fill="#f85a36"/><circle cx="1087.84" cy="619.70" r="1.35" fill="#f85a36"/><circle cx="1112.87" cy="620.30" r="1.35" fill="#f85a36"/><circle cx="1137.90" cy="618.70" r="1.35" fill="#f85a36"/><polyline points="387.00,605.30 412.03,609.20 437.06,514.70 462.09,607.80 487.12,609.60 512.15,603.50 537.18,608.00 562.21,570.60 587.24,603.90 612.27,609.60 637.30,606.60 662.33,609.60 687.36,619.10 712.39,608.60 737.42,530.70 762.45,604.80 787.48,615.50 812.51,614.00 837.54,614.00 862.57,612.20 887.60,614.80 912.63,619.50 937.66,614.70 962.69,610.90 987.72,589.00 1012.75,614.40 1037.78,613.30 1062.81,614.40 1087.84,612.50 1112.87,613.60 1137.90,619.70" fill="none" stroke="#2c6fe2" stroke-width="1.15" stroke-linejoin="round"/><circle cx="387.00" cy="605.30" r="1.35" fill="#2c6fe2"/><circle cx="412.03" cy="609.20" r="1.35" fill="#2c6fe2"/><circle cx="437.06" cy="514.70" r="1.35" fill="#2c6fe2"/><circle cx="462.09" cy="607.80" r="1.35" fill="#2c6fe2"/><circle cx="487.12" cy="609.60" r="1.35" fill="#2c6fe2"/><circle cx="512.15" cy="603.50" r="1.35" fill="#2c6fe2"/><circle cx="537.18" cy="608.00" r="1.35" fill="#2c6fe2"/><circle cx="562.21" cy="570.60" r="1.35" fill="#2c6fe2"/><circle cx="587.24" cy="603.90" r="1.35" fill="#2c6fe2"/><circle cx="612.27" cy="609.60" r="1.35" fill="#2c6fe2"/><circle cx="637.30" cy="606.60" r="1.35" fill="#2c6fe2"/><circle cx="662.33" cy="609.60" r="1.35" fill="#2c6fe2"/><circle cx="687.36" cy="619.10" r="1.35" fill="#2c6fe2"/><circle cx="712.39" cy="608.60" r="1.35" fill="#2c6fe2"/><circle cx="737.42" cy="530.70" r="1.35" fill="#2c6fe2"/><circle cx="762.45" cy="604.80" r="1.35" fill="#2c6fe2"/><circle cx="787.48" cy="615.50" r="1.35" fill="#2c6fe2"/><circle cx="812.51" cy="614.00" r="1.35" fill="#2c6fe2"/><circle cx="837.54" cy="614.00" r="1.35" fill="#2c6fe2"/><circle cx="862.57" cy="612.20" r="1.35" fill="#2c6fe2"/><circle cx="887.60" cy="614.80" r="1.35" fill="#2c6fe2"/><circle cx="912.63" cy="619.50" r="1.35" fill="#2c6fe2"/><circle cx="937.66" cy="614.70" r="1.35" fill="#2c6fe2"/><circle cx="962.69" cy="610.90" r="1.35" fill="#2c6fe2"/><circle cx="987.72" cy="589.00" r="1.35" fill="#2c6fe2"/><circle cx="1012.75" cy="614.40" r="1.35" fill="#2c6fe2"/><circle cx="1037.78" cy="613.30" r="1.35" fill="#2c6fe2"/><circle cx="1062.81" cy="614.40" r="1.35" fill="#2c6fe2"/><circle cx="1087.84" cy="612.50" r="1.35" fill="#2c6fe2"/><circle cx="1112.87" cy="613.60" r="1.35" fill="#2c6fe2"/><circle cx="1137.90" cy="619.70" r="1.35" fill="#2c6fe2"/></svg>
<div class="t" style="left:379.70px;top:625.20px;font-size:5.75px;line-height:6.42px;color:#333;font-weight:normal;">Tháng 3</div>
<div class="t" style="left:437.06px;transform:translateX(-50%);top:625.20px;font-size:5.75px;line-height:6.42px;color:#333;font-weight:normal;">3</div>
<div class="t" style="left:487.12px;transform:translateX(-50%);top:625.20px;font-size:5.75px;line-height:6.42px;color:#333;font-weight:normal;">5</div>
<div class="t" style="left:537.18px;transform:translateX(-50%);top:625.20px;font-size:5.75px;line-height:6.42px;color:#333;font-weight:normal;">7</div>
<div class="t" style="left:587.24px;transform:translateX(-50%);top:625.20px;font-size:5.75px;line-height:6.42px;color:#333;font-weight:normal;">9</div>
<div class="t" style="left:637.30px;transform:translateX(-50%);top:625.20px;font-size:5.75px;line-height:6.42px;color:#333;font-weight:normal;">11</div>
<div class="t" style="left:687.36px;transform:translateX(-50%);top:625.20px;font-size:5.75px;line-height:6.42px;color:#333;font-weight:normal;">13</div>
<div class="t" style="left:737.42px;transform:translateX(-50%);top:625.20px;font-size:5.75px;line-height:6.42px;color:#333;font-weight:normal;">15</div>
<div class="t" style="left:787.48px;transform:translateX(-50%);top:625.20px;font-size:5.75px;line-height:6.42px;color:#333;font-weight:normal;">17</div>
<div class="t" style="left:837.54px;transform:translateX(-50%);top:625.20px;font-size:5.75px;line-height:6.42px;color:#333;font-weight:normal;">19</div>
<div class="t" style="left:887.60px;transform:translateX(-50%);top:625.20px;font-size:5.75px;line-height:6.42px;color:#333;font-weight:normal;">21</div>
<div class="t" style="left:937.66px;transform:translateX(-50%);top:625.20px;font-size:5.75px;line-height:6.42px;color:#333;font-weight:normal;">23</div>
<div class="t" style="left:987.72px;transform:translateX(-50%);top:625.20px;font-size:5.75px;line-height:6.42px;color:#333;font-weight:normal;">25</div>
<div class="t" style="left:1037.78px;transform:translateX(-50%);top:625.20px;font-size:5.75px;line-height:6.42px;color:#333;font-weight:normal;">27</div>
<div class="t" style="left:1087.84px;transform:translateX(-50%);top:625.20px;font-size:5.75px;line-height:6.42px;color:#333;font-weight:normal;">29</div>
<div class="t" style="left:1137.90px;transform:translateX(-50%);top:625.20px;font-size:5.75px;line-height:6.42px;color:#333;font-weight:normal;">31</div>
<div style="position:absolute;left:727.90px;top:641.30px;width:4.2px;height:4.2px;border-radius:50%;background:#2c6fe2"></div>
<div class="t" style="left:735.80px;top:639.56px;font-size:6.9px;line-height:7.71px;color:#333;font-weight:normal;">Doanh số</div>
<div style="position:absolute;left:773.00px;top:641.30px;width:4.2px;height:4.2px;border-radius:50%;background:#f85a36"></div>
<div class="t" style="left:781.00px;top:639.56px;font-size:6.9px;line-height:7.71px;color:#333;font-weight:normal;">Nhận</div>
<div style="position:absolute;left:1136px;top:438px;width:10px;height:20px;overflow:hidden;z-index:3"><div style="width:20px;height:20px;border-radius:50%;background:#c9c9c9;"></div></div>
<svg style="position:absolute;left:1139px;top:444px;z-index:4" width="6" height="8" viewBox="0 0 6 8"><path d="M1.5 1 L4.3 4 L1.5 7" fill="none" stroke="#fff" stroke-width="0.9"/></svg>
<div class="wm" style="left:278.50px;top:170.30px;font-size:63.1px;line-height:72.56px;color:rgba(0,0,0,0.032);-webkit-text-stroke:0.6px rgba(0,0,0,0.032);transform-origin:0 58.15px;transform:scale(1,1.055);">DESIGNED BY CASK &amp; KHOA</div>
<div class="wm" style="left:273.30px;top:412.80px;font-size:63.0px;line-height:72.45px;color:rgba(0,0,0,0.032);-webkit-text-stroke:0.6px rgba(0,0,0,0.032);transform-origin:0 58.05px;transform:scale(1,1.065);">DESIGNED BY CASK &amp; KHOA</div>
</body></html>
